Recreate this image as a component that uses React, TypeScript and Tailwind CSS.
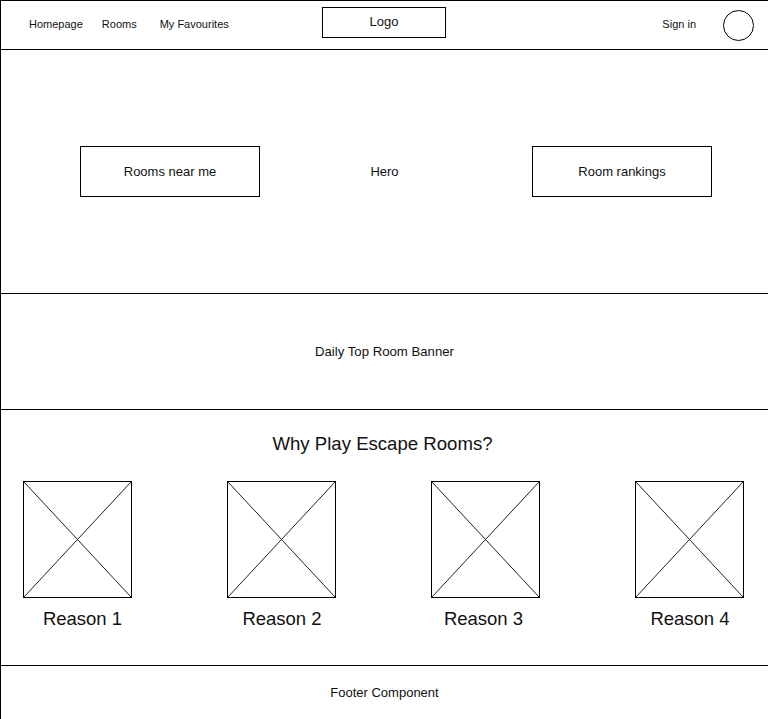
import React from "react";

function XBox() {
  return (
    <div className="w-[109px] h-[117px] border border-black">
      <svg width="107" height="115" viewBox="0 0 107 115" className="block">
        <line x1="0" y1="0" x2="107" y2="115" stroke="#222" strokeWidth="1" />
        <line x1="107" y1="0" x2="0" y2="115" stroke="#222" strokeWidth="1" />
      </svg>
    </div>
  );
}

export default function App() {
  const reasons = [
    { label: "Reason 1", cls: "ml-[10px]" },
    { label: "Reason 2", cls: "ml-[1px]" },
    { label: "Reason 3", cls: "mr-[4px]" },
    { label: "Reason 4", cls: "ml-[1px]" },
  ];
  return (
    <div
      className="w-[768px] h-[719px] overflow-hidden bg-white border-t border-l border-black text-[#111]"
      style={{ fontFamily: '"Liberation Sans", Arial, sans-serif' }}
    >
      <header className="h-[49px] border-b border-black flex items-center relative">
        <nav className="flex items-center text-[11px] pl-[28px] mb-[2px]">
          <span>Homepage</span>
          <span className="ml-[19px]">Rooms</span>
          <span className="ml-[23px]">My Favourites</span>
        </nav>
        <div className="absolute left-[321px] top-[6px] w-[124px] h-[31px] border border-black flex items-center justify-center text-[13px] pb-[1px]">
          Logo
        </div>
        <div className="ml-auto flex items-center">
          <span className="text-[11px] mr-[27px] mb-[2px]">Sign in</span>
          <div className="w-[31px] h-[31px] rounded-full border border-black mr-[14px]" />
        </div>
      </header>

      <section className="h-[244px] border-b border-black flex items-center pl-[79px] pr-[56px] text-[13px]">
        <div className="w-[180px] h-[51px] border border-black flex items-center justify-center">
          Rooms near me
        </div>
        <div className="flex-1 text-center pr-[23px]">Hero</div>
        <div className="w-[180px] h-[51px] border border-black flex items-center justify-center">
          Room rankings
        </div>
      </section>

      <section className="h-[116px] border-b border-black flex items-center justify-center text-[13.2px]">
        Daily Top Room Banner
      </section>

      <section className="h-[256px] border-b border-black flex flex-col">
        <h2 className="text-center text-[18.6px] mt-[22px] leading-[24px] pr-[4px]">Why Play Escape Rooms?</h2>
        <div className="flex pl-[22px] gap-[95px] mt-[25px]">
          {reasons.map((r) => (
            <div key={r.label} className="flex flex-col items-center w-[109px]">
              <XBox />
              <div className={`text-[18.5px] mt-[10px] leading-[22px] whitespace-nowrap ${r.cls}`}>{r.label}</div>
            </div>
          ))}
        </div>
      </section>

      <footer className="h-[54px] flex items-center justify-center text-[13px]">
        Footer Component
      </footer>
    </div>
  );
}
